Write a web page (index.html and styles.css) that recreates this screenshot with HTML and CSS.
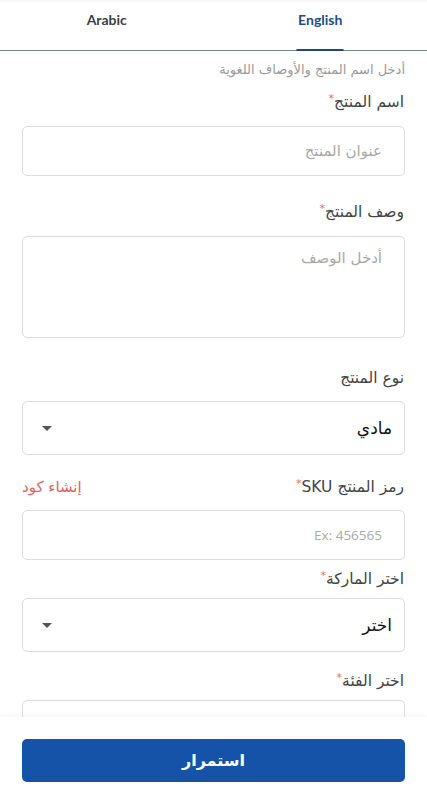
FILE: index.html
```html
<!DOCTYPE html>
<html lang="ar">
<head>
<meta charset="utf-8">
<meta name="viewport" content="width=device-width, initial-scale=1">
<link rel="stylesheet" href="styles.css">
</head>
<body>
<div class="tabs">
  <div class="tab">Arabic</div>
  <div class="tab active">English</div>
</div>
<main class="form" dir="rtl">
  <p class="hint">أدخل اسم المنتج والأوصاف اللغوية</p>

  <div class="field f1">
    <label class="label">اسم المنتج<span class="req">*</span></label>
    <div class="input"><span class="ph">عنوان المنتج</span></div>
  </div>

  <div class="field f2">
    <label class="label">وصف المنتج<span class="req">*</span></label>
    <div class="input textarea"><span class="ph">أدخل الوصف</span></div>
  </div>

  <div class="field f3">
    <label class="label">نوع المنتج</label>
    <div class="input select"><span class="val">مادي</span><span class="caret"></span></div>
  </div>

  <div class="field f4">
    <div class="label-row">
      <label class="label">رمز المنتج SKU<span class="req">*</span></label>
      <span class="gen">إنشاء كود</span>
    </div>
    <div class="input"><span class="ph ltr">Ex: 456565</span></div>
  </div>

  <div class="field f5">
    <label class="label">اختر الماركة<span class="req">*</span></label>
    <div class="input select"><span class="val">اختر</span><span class="caret"></span></div>
  </div>

  <div class="field f6">
    <label class="label">اختر الفئة<span class="req">*</span></label>
    <div class="input select"><span class="val"></span><span class="caret"></span></div>
  </div>
</main>
<footer class="bottom">
  <button class="btn">استمرار</button>
</footer>
</body>
</html>
```
FILE: styles.css
```css
* { box-sizing: border-box; }
html, body { margin: 0; padding: 0; background: #fff; }
body {
  font-family: "DejaVu Sans", "Noto Sans", sans-serif;
  color: #333;
  width: 427px;
  height: 800px;
  overflow: hidden;
  position: relative;
}
.tabs {
  display: flex;
  height: 51px;
  border-bottom: 1px solid #6f8796;
  box-shadow: inset 0 3px 3px -2px #eef1f4;
}
.tab {
  flex: 1;
  display: flex;
  justify-content: center;
  padding-top: 11px;
  font-family: "Lato", "Open Sans", sans-serif;
  font-weight: 700;
  font-size: 14px;
  color: #3a3f47;
  position: relative;
}
.tab.active { color: #1d4e7f; }
.tab.active::after {
  content: "";
  position: absolute;
  bottom: -1px;
  left: 50%;
  transform: translateX(-50%);
  width: 47px;
  height: 2px;
  background: #1b4a78;
}
.form {
  padding: 0 22px;
}
.hint {
  margin: 11px 0 0;
  font-size: 13px;
  line-height: 16px;
  color: #9a9a9a;
}
.field { display: flex; flex-direction: column; }
.label {
  display: block;
  font-size: 15.5px;
  line-height: 20px;
  height: 20px;
  color: #444;
  padding-right: 1px;
}
.req { color: #e46a70; font-size: 11px; vertical-align: top; line-height: 14px; }
.label-row {
  display: flex;
  justify-content: space-between;
  align-items: center;
  height: 20px;
}
.gen { font-size: 15px; color: #d86464; line-height: 20px; }
.input {
  border: 1px solid #dcdcdc;
  border-radius: 5px;
  height: 50px;
  display: flex;
  align-items: center;
  padding: 0 22px;
  background: #fff;
}
.textarea { height: 102px; align-items: flex-start; padding-top: 12px; }
.select { height: 54px; justify-content: space-between; padding: 0 12px 0 19px; }
.ph { font-size: 15px; color: #a8a8a8; }
.ph.ltr { direction: ltr; font-family: "Open Sans", sans-serif; font-size: 13.5px; }
.val { font-size: 17px; color: #111; }
.caret {
  width: 0; height: 0;
  border-left: 5px solid transparent;
  border-right: 5px solid transparent;
  border-top: 5px solid #555;
}
.f1 { margin-top: 14px; }
.f1 .input { margin-top: 14px; }
.f2 { margin-top: 26px; }
.f2 .input { margin-top: 14px; }
.f3 { margin-top: 30px; }
.f3 .input { margin-top: 13px; }
.f4 { margin-top: 22px; }
.f4 .input { margin-top: 13px; }
.f5 { margin-top: 9px; }
.f5 .input { margin-top: 9px; }
.f6 { margin-top: 19px; }
.f6 .input { margin-top: 9px; }
.bottom {
  position: absolute;
  left: 0; right: 0; bottom: 0;
  height: 83px;
  background: #fff;
  box-shadow: 0 -2px 4px rgba(0,0,0,0.04);
  padding: 22px 22px 0;
}
.btn {
  width: 100%;
  height: 43px;
  border: none;
  border-radius: 5px;
  background: #1553a8;
  color: #fff;
  font-family: "DejaVu Sans", sans-serif;
  font-weight: 700;
  font-size: 16px;
}
```
